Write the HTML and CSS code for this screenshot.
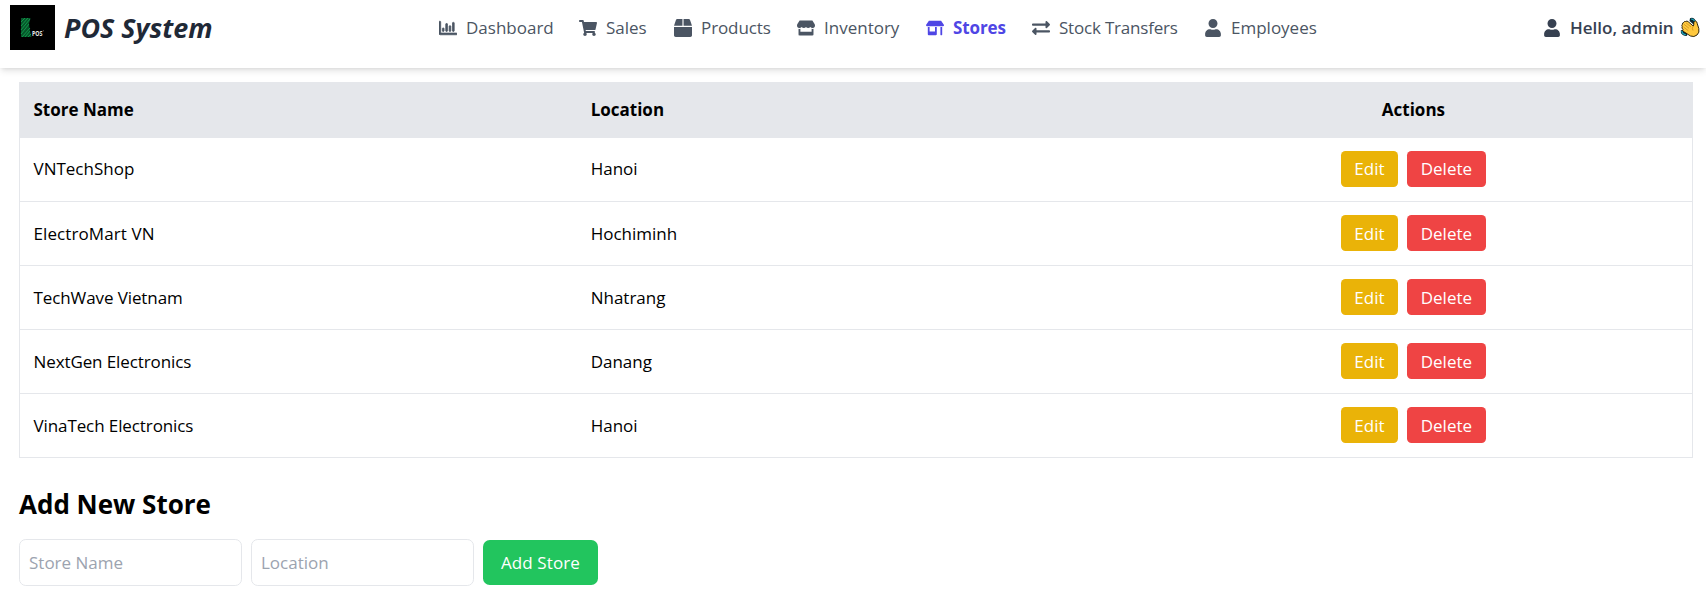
FILE: index.html
```html
<!DOCTYPE html>
<html lang="en">
<head>
<meta charset="utf-8">
<title>POS System</title>
<link rel="stylesheet" href="styles.css">
</head>
<body>
<header class="topbar">
  <div class="brand">
    <svg class="logo" viewBox="0 0 45 45">
      <rect width="45" height="45" fill="#000"/>
      <path d="M11 13h9.500l-1.500 6 1 7 1.500 6H11z" fill="#07552a"/>
      <path d="M11 17l4-4M11 21l7-8M11 25l9-11M11 29l8-10M12 32l8-9M15 32l5-6M18 32l3-3" stroke="#10a04e" stroke-width=".9" fill="none"/>
      <text class="logo-text" x="22" y="31.200" textLength="10.500" lengthAdjust="spacingAndGlyphs">POS</text>
      <circle cx="33.300" cy="25.800" r=".5" fill="#888"/>
    </svg>
    <span class="brand-name">POS System</span>
  </div>
  <nav class="nav">
    <a class="nav-item"><svg class="icon" viewBox="0 0 512 512"><path d="M396.8 352h22.4c6.400 0 12.800-6.400 12.800-12.800V108.800c0-6.400-6.400-12.800-12.800-12.800h-22.400c-6.400 0-12.800 6.400-12.800 12.800v230.400c0 6.400 6.400 12.800 12.800 12.800zm-192 0h22.400c6.400 0 12.800-6.400 12.800-12.800V140.800c0-6.400-6.400-12.800-12.800-12.800h-22.400c-6.400 0-12.800 6.400-12.800 12.800v198.400c0 6.400 6.400 12.800 12.800 12.800zm96 0h22.400c6.400 0 12.800-6.400 12.800-12.800V204.800c0-6.400-6.400-12.800-12.800-12.800h-22.400c-6.400 0-12.800 6.400-12.800 12.800v134.400c0 6.400 6.400 12.800 12.800 12.800zM496 400H48V80c0-8.840-7.160-16-16-16H16C7.160 64 0 71.160 0 80v336c0 17.670 14.330 32 32 32h464c8.840 0 16-7.160 16-16v-16c0-8.840-7.160-16-16-16zm-387.200-48h22.400c6.400 0 12.800-6.400 12.800-12.800v-70.400c0-6.400-6.400-12.800-12.800-12.800h-22.400c-6.400 0-12.800 6.400-12.800 12.800v70.400c0 6.400 6.400 12.800 12.800 12.800z" stroke="currentColor" stroke-width="22"/></svg><span class="label w-dashboard">Dashboard</span></a>
    <a class="nav-item"><svg class="icon" viewBox="0 0 576 512"><path d="M528.120 301.319l47.273-208C578.806 78.301 567.391 64 551.990 64H159.208l-9.166-44.810C147.758 8.021 137.930 0 126.529 0H24C10.745 0 0 10.745 0 24v16c0 13.255 10.745 24 24 24h69.883l70.248 343.435C147.325 417.100 136 435.222 136 456c0 30.928 25.072 56 56 56s56-25.072 56-56c0-15.674-6.447-29.835-16.824-40h209.647C430.447 426.165 424 440.326 424 456c0 30.928 25.072 56 56 56s56-25.072 56-56c0-22.172-12.888-41.332-31.579-50.405l5.517-24.276c3.413-15.018-8.002-29.319-23.403-29.319H218.117l-6.545-32h293.145c11.206 0 20.920-7.754 23.403-18.681z"/></svg><span class="label w-sales">Sales</span></a>
    <a class="nav-item"><svg class="icon" viewBox="0 0 512 512"><path d="M509.500 184.600L458.900 32.800C452.400 13.200 434.100 0 413.400 0H272v192h238.700c-.4-2.500-.4-5-1.200-7.400zM240 0H98.600c-20.700 0-39 13.200-45.500 32.800L2.500 184.600c-.8 2.400-.8 4.900-1.200 7.400H240V0zM0 224v240c0 26.500 21.500 48 48 48h416c26.500 0 48-21.500 48-48V224H0z"/></svg><span class="label w-products">Products</span></a>
    <a class="nav-item"><svg class="icon" viewBox="0 0 616 512"><path d="M602 118.600L537.100 15C531.300 5.700 521 0 510 0H106C95 0 84.700 5.700 78.900 15L14 118.600c-33.500 53.500-3.800 127.900 58.800 136.400 4.500.6 9.100.9 13.700.9 29.600 0 55.800-13 73.800-33.100 18 20.100 44.300 33.100 73.800 33.100 29.600 0 55.800-13 73.800-33.100 18 20.100 44.300 33.100 73.800 33.100 29.600 0 55.800-13 73.800-33.100 18.100 20.100 44.300 33.100 73.800 33.100 4.700 0 9.200-.3 13.700-.9 62.800-8.400 92.600-82.800 59-136.400zM529.500 288c-10 0-19.900-1.500-29.500-3.800V384H116v-99.800c-9.600 2.200-19.500 3.800-29.500 3.800-6 0-12.100-.4-18-1.200-5.600-.8-11.100-2.100-16.400-3.600V480c0 17.700 14.300 32 32 32h448c17.700 0 32-14.300 32-32V283.200c-5.400 1.600-10.800 2.900-16.400 3.600-6.100.8-12.100 1.200-18.200 1.200z"/></svg><span class="label w-inventory">Inventory</span></a>
    <a class="nav-item active"><svg class="icon" viewBox="0 0 640 512"><path d="M320 384H128V224H64v256c0 17.700 14.300 32 32 32h256c17.700 0 32-14.300 32-32V224h-64v160zm314.600-241.800l-85.300-128c-6-8.900-16-14.200-26.700-14.200H117.400c-10.700 0-20.700 5.300-26.600 14.200l-85.300 128c-14.200 21.300 1 49.800 26.600 49.800H608c25.500 0 40.700-28.500 26.600-49.800zM512 496c0 8.800 7.200 16 16 16h32c8.800 0 16-7.200 16-16V224h-64v272z"/></svg><span class="label w-stores">Stores</span></a>
    <a class="nav-item"><svg class="icon" viewBox="0 0 512 512"><path d="M0 168v-16c0-13.255 10.745-24 24-24h360V80c0-21.367 25.899-32.042 40.971-16.971l80 80c9.372 9.373 9.372 24.569 0 33.941l-80 80C409.956 271.982 384 261.456 384 240v-48H24c-13.255 0-24-10.745-24-24zm488 152H128v-48c0-21.314-25.862-32.080-40.971-16.971l-80 80c-9.372 9.373-9.372 24.569 0 33.941l80 80C102.057 463.997 128 453.437 128 432v-48h360c13.255 0 24-10.745 24-24v-16c0-13.255-10.745-24-24-24z"/></svg><span class="label w-transfers">Stock Transfers</span></a>
    <a class="nav-item"><svg class="icon" viewBox="0 0 448 512"><path d="M224 256c70.700 0 128-57.300 128-128S294.700 0 224 0 96 57.300 96 128s57.300 128 128 128zm89.600 32h-16.700c-22.200 10.200-46.900 16-72.900 16s-50.600-5.800-72.900-16h-16.700C60.200 288 0 348.200 0 422.400V464c0 26.500 21.500 48 48 48h352c26.500 0 48-21.500 48-48v-41.600c0-74.200-60.200-134.400-134.400-134.400z"/></svg><span class="label w-employees">Employees</span></a>
  </nav>
  <div class="user">
    <svg class="icon" viewBox="0 0 448 512"><path d="M224 256c70.700 0 128-57.300 128-128S294.700 0 224 0 96 57.300 96 128s57.300 128 128 128zm89.600 32h-16.700c-22.200 10.200-46.900 16-72.900 16s-50.600-5.800-72.900-16h-16.700C60.200 288 0 348.200 0 422.400V464c0 26.500 21.500 48 48 48h352c26.500 0 48-21.500 48-48v-41.600c0-74.200-60.200-134.400-134.400-134.400z"/></svg>
    <span class="hello">Hello, admin</span>
    <svg class="wave" viewBox="0 0 20 21">
      <path d="M10 1.200Q12.500 .2 14.500 2Q16.500 3.500 16 6.500L13.500 7.500L9.500 4zM.8 13.300Q.3 16 2.200 17.500Q4 19.300 7 18.800L7.500 16.500L3 13z" fill="#0b2830"/>
      <path d="M11 2Q14.500 2.200 14.800 5.500M1.800 14Q2.200 17.300 5.800 17.700" fill="none" stroke="#1fb0c9" stroke-width="1.200"/>
      <path d="M2.200 9.500Q1.300 8 2.500 7.200Q2.200 5.700 3.800 5.400Q4.300 4 5.700 4.500Q7 3.500 8.200 4.700L13.200 9Q14 8.500 13.800 5.800Q14 3.900 15.600 4.100Q17 4.300 17.300 6.800L18.800 11.500Q19.800 15.500 17 18Q14 20.500 10.500 19L3.500 14.500Q2.200 13.500 3 12.500Q1.300 11 2.200 9.500z" fill="#ffc83d" stroke="#1d1604" stroke-width=".9"/>
      <path d="M4 7.300l5 4M6 5.800l5 4.200M3.500 10l4.800 3.700M13.200 9.200Q11.500 11 13 13.500" fill="none" stroke="#b97b12" stroke-width=".6"/>
    </svg>
  </div>
</header>
<main class="page">
  <table class="stores">
    <thead>
      <tr><th>Store Name</th><th>Location</th><th class="center">Actions</th></tr>
    </thead>
    <tbody>
      <tr><td>VNTechShop</td><td>Hanoi</td><td><div class="actions"><button class="btn edit">Edit</button><button class="btn delete">Delete</button></div></td></tr>
      <tr><td class="loose">ElectroMart VN</td><td>Hochiminh</td><td><div class="actions"><button class="btn edit">Edit</button><button class="btn delete">Delete</button></div></td></tr>
      <tr><td class="tight">TechWave Vietnam</td><td>Nhatrang</td><td><div class="actions"><button class="btn edit">Edit</button><button class="btn delete">Delete</button></div></td></tr>
      <tr><td class="tight">NextGen Electronics</td><td>Danang</td><td><div class="actions"><button class="btn edit">Edit</button><button class="btn delete">Delete</button></div></td></tr>
      <tr><td class="tight">VinaTech Electronics</td><td>Hanoi</td><td><div class="actions"><button class="btn edit">Edit</button><button class="btn delete">Delete</button></div></td></tr>
    </tbody>
  </table>
  <h2 class="title">Add New Store</h2>
  <form class="add-form">
    <input class="field" type="text" placeholder="Store Name">
    <input class="field" type="text" placeholder="Location">
    <button class="add" type="button">Add Store</button>
  </form>
</main>
</body>
</html>
```

FILE: styles.css
```css
* { box-sizing: border-box; }
body {
  margin: 0;
  height: 594px;
  overflow: hidden;
  background: #fff;
  color: #000;
  font: 17px/27px "Open Sans", "Noto Sans", sans-serif;
}
button, input { font: inherit; letter-spacing: inherit; }

.topbar {
  display: flex;
  align-items: flex-start;
  height: 68px;
  padding: 5px 6px 0 10px;
  box-shadow: 0 4.500px 6.750px -1px rgba(0,0,0,.1), 0 2px 4.500px -2px rgba(0,0,0,.1);
}
.brand { display: flex; align-items: center; gap: 9px; width: 429px; height: 45px; }
.logo { width: 45px; height: 45px; }
.logo-text { font: 700 7.500px "Open Sans", sans-serif; fill: #e8e8e8; }
.brand-name { padding-bottom: 1px; font-size: 26.900px; font-weight: 700; font-style: italic; color: #1f2937; white-space: nowrap; }
.nav { display: flex; align-items: center; gap: 27px; height: 45px; color: #4b5563; }
.nav-item { display: flex; align-items: center; gap: 9px; }
.icon { width: 18px; height: 18px; fill: currentColor; flex: none; }
.label { white-space: nowrap; }
.w-dashboard { width: 86px; }
.w-sales { width: 41px; }
.w-products { width: 69px; letter-spacing: -.1px; }
.w-inventory { width: 75px; }
.w-stores { width: 52px; letter-spacing: -.1px; }
.w-transfers { width: 118px; letter-spacing: -.2px; }
.w-employees { width: 86px; }
.active { color: #4f46e5; font-weight: 700; }
.user { display: flex; align-items: center; height: 45px; margin-left: auto; color: #374151; font-weight: 600; }
.hello { width: 110px; margin-left: 9px; white-space: nowrap; }
.wave { width: 20px; height: 21px; }

.page { padding: 14px 13px 0 19px; }
.stores { width: 1674px; border-collapse: collapse; table-layout: fixed; border: 1px solid #e5e7eb; }
.stores th { height: 55px; padding: 0 13.500px 2px; text-align: left; background: #e5e7eb; font-weight: 700; }
.stores .center { text-align: center; }
.stores td { height: 64px; padding: 0 13.500px 1px; }
.stores .tight { letter-spacing: -.1px; }
.stores .loose { letter-spacing: .1px; }
.stores tbody tr { border-bottom: 1px solid #e5e7eb; }
.actions { display: flex; justify-content: center; gap: 9px; }
.btn { height: 36px; padding: 0; border: 0; border-radius: 4.500px; color: #fff; }
.edit { width: 57px; background: #eab308; }
.delete { width: 79px; background: #ef4444; }

.title { margin: 28px 0 0; font-size: 26px; line-height: 36px; font-weight: 700; }
.add-form { display: flex; align-items: center; gap: 9px; margin-top: 17px; }
.field { width: 223px; height: 47px; padding: 0 9px; border: 1px solid #e5e7eb; border-radius: 6.750px; background: #fff; }
.field::placeholder { color: #9ca3af; opacity: 1; }
.add { width: 115px; height: 45px; padding: 0; border: 0; border-radius: 6.750px; background: #22c55e; color: #fff; letter-spacing: .1px; }
```
